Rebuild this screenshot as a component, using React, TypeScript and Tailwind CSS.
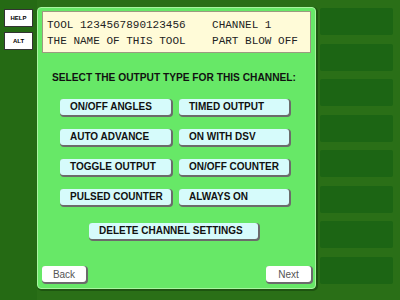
const outputTypes = [
  ["ON/OFF ANGLES", "TIMED OUTPUT"],
  ["AUTO ADVANCE", "ON WITH DSV"],
  ["TOGGLE OUTPUT", "ON/OFF COUNTER"],
  ["PULSED COUNTER", "ALWAYS ON"],
];

function TypeButton({ label, className = "" }: { label: string; className?: string }) {
  return (
    <button
      className={`h-[16px] rounded-[3px] bg-[#d6fbfb] pl-[10px] text-left text-[10px] font-bold leading-[16px] text-[#111] shadow-[1px_1px_0_1px_#6b6b6b] ${className}`}
    >
      {label}
    </button>
  );
}

function SideKey({ label }: { label: string }) {
  return (
    <button className="flex h-[18px] w-[29px] items-center justify-center border border-[#333] bg-white text-[6px] font-bold text-black">
      {label}
    </button>
  );
}

export default function App() {
  return (
    <div className="flex h-[300px] w-[400px] bg-[#2a6f17] font-['Liberation_Sans',Arial,sans-serif]">
      <div className="flex w-[37px] flex-col gap-[5px] bg-[#256a14] pl-[4px] pt-[9px]">
        <SideKey label="HELP" />
        <SideKey label="ALT" />
      </div>

      <div className="mt-[7px] flex h-[282px] w-[279px] flex-col rounded-[4px] border border-[#a8f5a0] bg-[#67e867] shadow-[1px_1px_0_1px_#1d5410]">
        <div className="mx-[4px] mt-[3px] h-[42px] border border-[#9c9a80] bg-[#fffbd8] pl-[4px] pt-[5px] font-['Liberation_Mono',monospace] text-[11px] leading-[16px] whitespace-pre text-[#222]">
          <div>TOOL 1234567890123456    CHANNEL 1</div>
          <div>THE NAME OF THIS TOOL    PART BLOW OFF</div>
        </div>

        <div className="mt-[17px] pl-[14px] text-[10.2px] font-bold text-[#111]">
          SELECT THE OUTPUT TYPE FOR THIS CHANNEL:
        </div>

        <div className="mt-[14px] ml-[22px] grid grid-cols-[111px_110px] gap-x-[8px] gap-y-[14px]">
          {outputTypes.flat().map((t) => (
            <TypeButton key={t} label={t} />
          ))}
        </div>

        <div className="mt-[12px] ml-[51px]">
          <TypeButton label="DELETE CHANNEL SETTINGS" className="w-[169px]" />
        </div>

        <div className="mt-auto mb-[6px] flex justify-between px-[4px]">
          <button className="h-[16px] w-[44px] rounded-[3px] bg-white text-[10px] text-[#555] shadow-[1px_1px_0_1px_#6b6b6b]">
            Back
          </button>
          <button className="h-[16px] w-[45px] rounded-[3px] bg-white text-[10px] text-[#555] shadow-[1px_1px_0_1px_#6b6b6b]">
            Next
          </button>
        </div>
      </div>

      <div className="ml-[4px] flex w-[73px] flex-col gap-[8.5px] pt-[8px]">
        {Array.from({ length: 8 }).map((_, i) => (
          <div key={i} className="h-[27px] rounded-[2px] bg-[#1c6514]" />
        ))}
      </div>
    </div>
  );
}
